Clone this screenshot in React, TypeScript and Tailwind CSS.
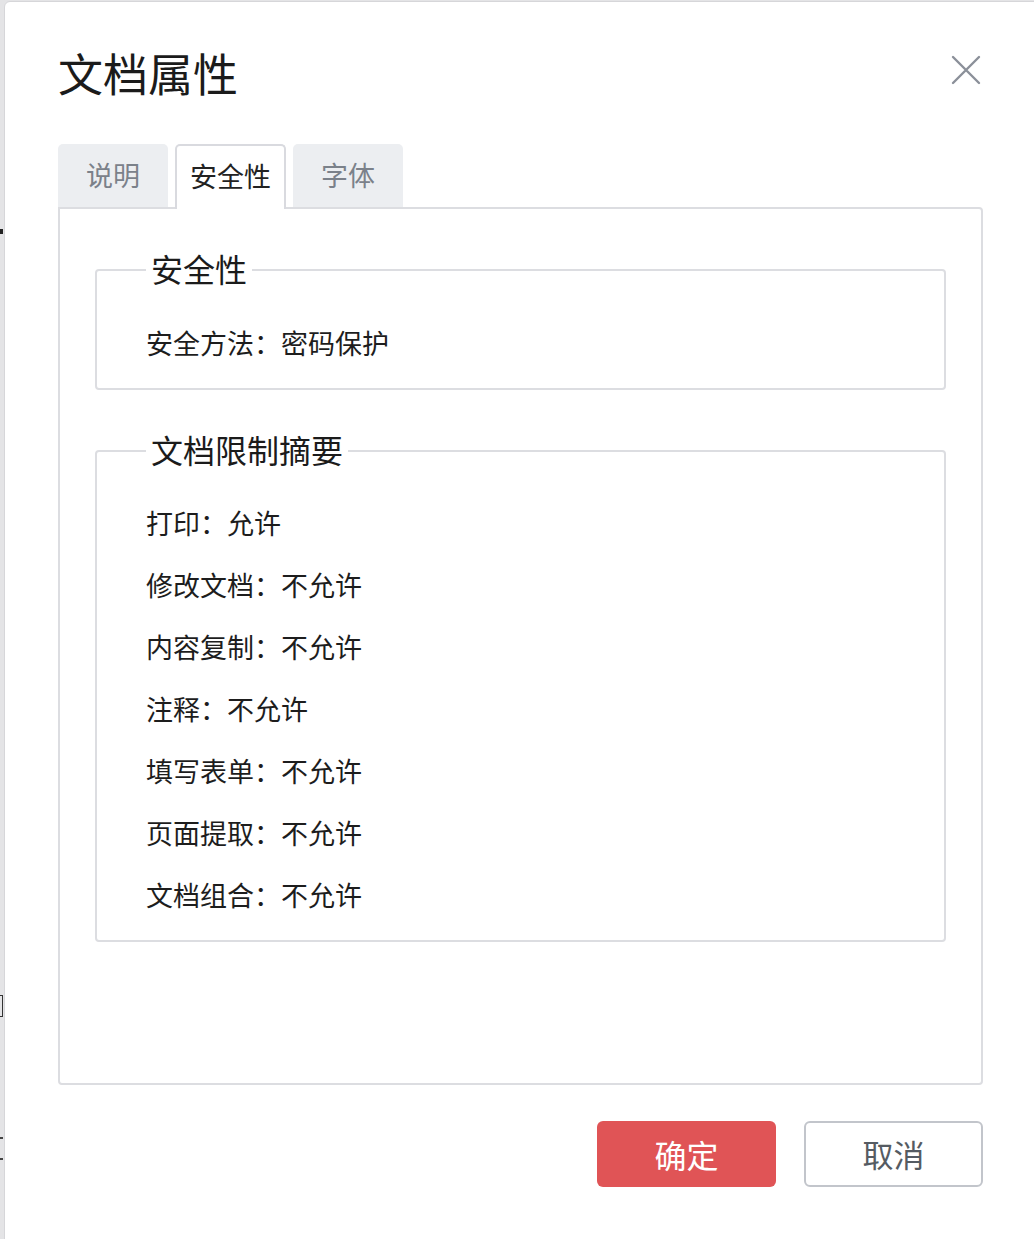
const TABS = [
  { key: "desc", label: "说明" },
  { key: "security", label: "安全性" },
  { key: "font", label: "字体" },
];

const RESTRICTIONS: [string, string][] = [
  ["打印", "允许"],
  ["修改文档", "不允许"],
  ["内容复制", "不允许"],
  ["注释", "不允许"],
  ["填写表单", "不允许"],
  ["页面提取", "不允许"],
  ["文档组合", "不允许"],
];

function CloseIcon() {
  return (
    <svg width="30" height="30" viewBox="0 0 30 30" fill="none">
      <path
        d="M2 2L28 28M28 2L2 28"
        stroke="#8b9099"
        strokeWidth="2.4"
        strokeLinecap="round"
      />
    </svg>
  );
}

export default function App() {
  const active = "security";

  return (
    <div className="relative h-[1239px] w-[1034px] overflow-hidden bg-[#e4e4e6] font-['Noto_Sans_CJK_SC',sans-serif] text-[#1d1d1d]">
      {/* bits of the page behind the dialog */}
      <div className="absolute left-0 top-[229px] h-[5px] w-[3px] bg-[#222]" />
      <div className="absolute left-0 top-[995px] h-[22px] w-[3px] border-y border-r border-[#333]" />
      <div className="absolute left-0 top-[1137px] h-[2px] w-[3px] bg-[#444]" />
      <div className="absolute left-0 top-[1158px] h-[2px] w-[3px] bg-[#444]" />

      <div className="ml-[4px] mt-[1px] h-[1300px] w-[1040px] rounded-tl-[6px] border border-[#d6d6d9] bg-white pl-[53px] pr-[60px] pt-[44px]">
        <div className="flex h-[53px] items-center justify-between">
          <h1 className="text-[45px] leading-[53px] text-[#1b1b1b]">文档属性</h1>
          <button className="mr-[2px] mt-[-5px]">
            <CloseIcon />
          </button>
        </div>

        <div className="relative z-10 mt-[45px] -mb-[2px] flex items-start gap-[7px]">
          {TABS.map((t) =>
            t.key === active ? (
              <div
                key={t.key}
                className="flex h-[65px] w-[111px] items-center justify-center rounded-t-[5px] border-2 border-b-0 border-[#d9dadf] bg-white pb-[2px] text-[27px] text-[#222]"
              >
                {t.label}
              </div>
            ) : (
              <div
                key={t.key}
                className="flex h-[63px] w-[110px] items-center justify-center rounded-t-[5px] bg-[#eceef1] text-[27px] text-[#7b818a]"
              >
                {t.label}
              </div>
            ),
          )}
        </div>

        <div className="h-[878px] rounded-b-[4px] rounded-tr-[4px] border-2 border-[#dcdde1] px-[35px] pt-[42px]">
          <fieldset className="rounded-[4px] border-2 border-[#dcdde1] px-[49px]">
            <legend className="px-[5px] pb-[4px] text-[32px] leading-[34px] text-[#1b1b1b]">安全性</legend>
            <div className="pb-[27px] pt-[36px] text-[27px] leading-[36px]">安全方法：密码保护</div>
          </fieldset>

          <fieldset className="mt-[42px] rounded-[4px] border-2 border-[#dcdde1] px-[49px]">
            <legend className="px-[5px] pb-[4px] text-[32px] leading-[34px] text-[#1b1b1b]">文档限制摘要</legend>
            <div className="pb-[14px] pt-[22px]">
              {RESTRICTIONS.map(([name, value]) => (
                <div key={name} className="text-[27px] leading-[62px]">
                  {name}：{value}
                </div>
              ))}
            </div>
          </fieldset>
        </div>

        <div className="mt-[36px] flex justify-end gap-[28px]">
          <button className="h-[66px] w-[179px] rounded-[6px] bg-[#e05456] text-[32px] text-white">
            确定
          </button>
          <button className="h-[66px] w-[179px] rounded-[6px] border-2 border-[#c2c5cb] bg-white text-[31px] text-[#555b62]">
            取消
          </button>
        </div>
      </div>
    </div>
  );
}
